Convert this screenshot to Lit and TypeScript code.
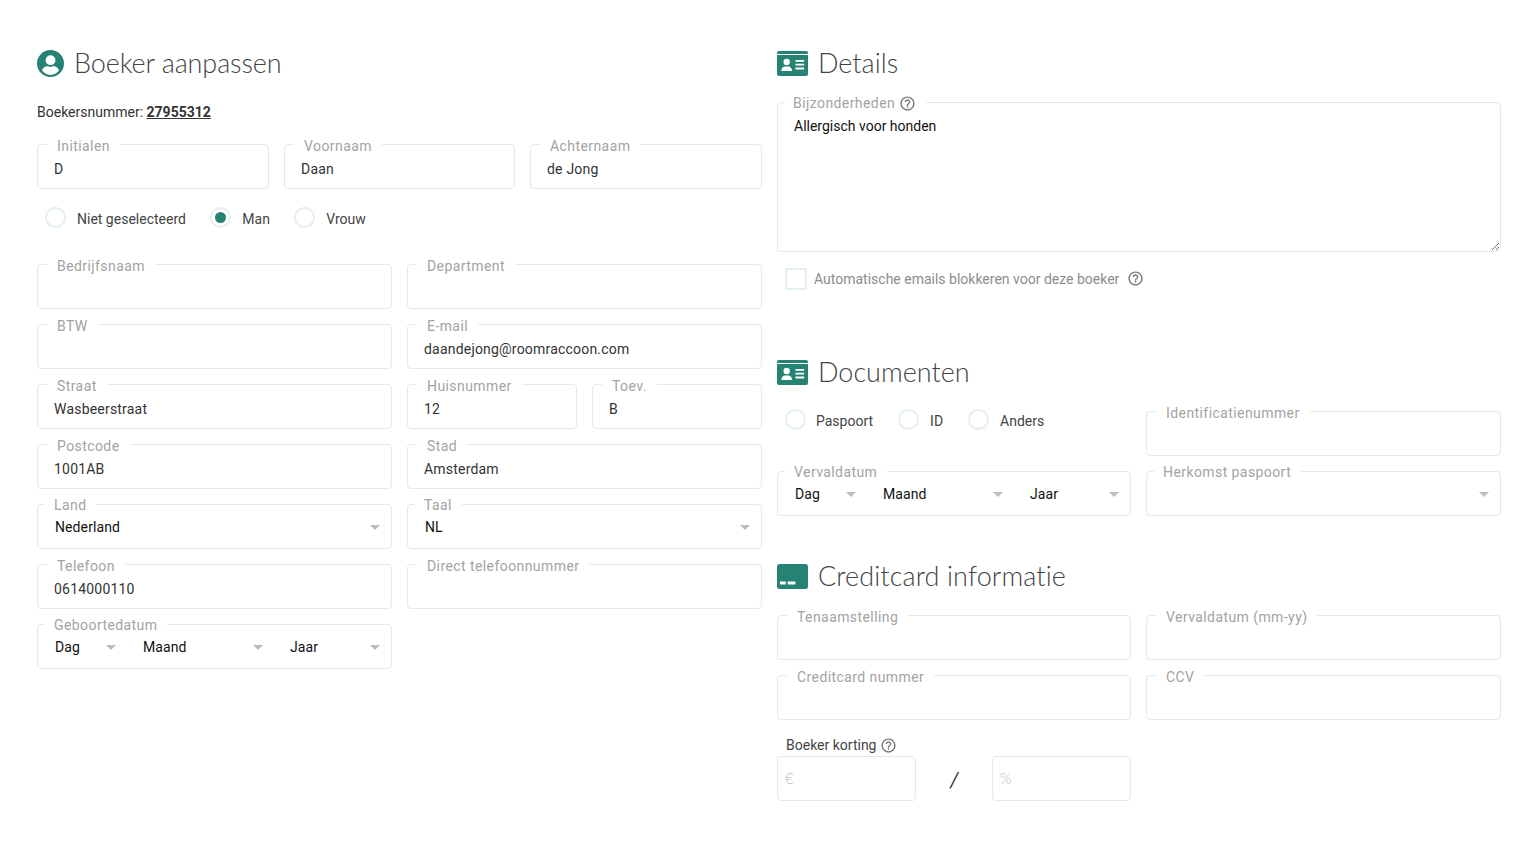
import { LitElement, html, css, nothing } from "lit";
import { customElement } from "lit/decorators.js";

const help = html`<svg class="help" viewBox="0 0 24 24" fill="currentColor"><path d="M11 18h2v-2h-2v2zm1-16C6.48 2 2 6.48 2 12s4.48 10 10 10 10-4.48 10-10S17.52 2 12 2zm0 18c-4.41 0-8-3.59-8-8s3.59-8 8-8 8 3.59 8 8-3.59 8-8 8zm0-14c-2.21 0-4 1.79-4 4h2c0-1.1.9-2 2-2s2 .9 2 2c0 2-3 1.75-3 5h2c0-2.25 3-2.5 3-5 0-2.21-1.79-4-4-4z"/></svg>`;

const userIcon = html`<svg class="ic-user" viewBox="0 0 27 27"><circle cx="13.5" cy="13.5" r="13.5" fill="#268273"/><circle cx="13.5" cy="10.2" r="4.9" fill="#fff"/><path d="M5 20.6c1-3 3.2-4.3 5-4.3 1 0 2 .6 3.500.6s2.500-.6 3.500-.6c1.800 0 4 1.300 5 4.300-2 2.700-5 4.400-8.500 4.400S7 23.300 5 20.600z" fill="#fff"/></svg>`;

const cardIcon = html`<svg class="ic-card" viewBox="0 0 32 25" preserveAspectRatio="none"><path d="M2 0h28a2 2 0 0 1 2 2v1H0V2a2 2 0 0 1 2-2z" fill="#268273"/><path d="M0 4h32v19a2 2 0 0 1-2 2H2a2 2 0 0 1-2-2z" fill="#268273"/><circle cx="10" cy="11" r="3.300" fill="#fff"/><path d="M4.500 20c0-3 2-4.500 3.500-4.500h4c1.500 0 3.500 1.500 3.500 4.500z" fill="#fff"/><path d="M19 9h9v1.800h-9zM19 12.800h9v1.800h-9zM19 16.600h9v1.800h-9z" fill="#fff"/></svg>`;

const creditIcon = html`<svg class="ic-card" viewBox="0 0 32 25" preserveAspectRatio="none"><rect width="32" height="25" rx="2.500" fill="#268273"/><path d="M3 17.500h6v3H3zM11 17.500h8v3h-8z" fill="#fff"/></svg>`;

@customElement("app-root")
export class AppRoot extends LitElement {
  static styles = css`
    :host {
      display: block;
      font-family: Roboto, "Liberation Sans", sans-serif;
      font-size: 14px;
      color: #333;
      background: #fff;
      min-height: 842px;
    }
    .page {
      display: grid;
      grid-template-columns: 725px 724px;
      column-gap: 15px;
      padding: 43px 19px 0 37px;
    }
    .heading {
      display: flex;
      align-items: center;
      height: 40px;
      margin: 0;
      font-family: Lato, sans-serif;
      font-weight: 300;
      font-size: 27px;
      color: #444;
    }
    .heading span { position: relative; top: -1px; }
    .heading.tight { letter-spacing: -0.1px; }
    .heading.wide { letter-spacing: 0.1px; }
    .ic-user { width: 27px; height: 27px; margin-right: 10px; flex: none; }
    .ic-card { width: 31px; height: 25px; margin-right: 10px; flex: none; }
    .booker {
      height: 20px;
      line-height: 20px;
      margin-top: 19px;
    }
    .booker b { font-weight: 700; text-decoration: underline; }

    .grid { display: grid; gap: 15px; }
    .g3 { grid-template-columns: 232px 231px 232px; margin-top: 22px; }
    .g2 { grid-template-columns: 355px 355px; }
    .split { display: grid; grid-template-columns: 170px 170px; gap: 15px; }
    .r2 { grid-template-columns: 354px 355px; }

    .field {
      position: relative;
      height: 45px;
      box-sizing: border-box;
      border: 1px solid #e8e8e8;
      border-radius: 4px;
      letter-spacing: 0.2px;
    }
    .label {
      position: absolute;
      top: -8px;
      left: 9px;
      padding: 0 10px;
      background: #fff;
      color: #a3a3a3;
      line-height: 18px;
      white-space: nowrap;
      letter-spacing: 0.42px;
    }
    .value {
      display: block;
      padding: 15px 0 0 16px;
      line-height: 18px;
      color: #333;
    }
    .field.sel .label { top: -9px; left: 7px; padding: 0 10px 0 9px; }
    .sel-row { display: flex; padding: 13px 0 0 17px; }
    .seg {
      display: flex;
      align-items: center;
      box-sizing: border-box;
      line-height: 18px;
      min-height: 18px;
      color: #111;
      letter-spacing: 0.1px;
    }
    .seg.full { flex: 1; padding-right: 11px; }
    .seg.dag { width: 88px; padding-right: 27px; }
    .seg.maand { width: 147px; padding-right: 27px; }
    .caret {
      width: 0;
      height: 0;
      margin-left: auto;
      border-left: 5px solid transparent;
      border-right: 5px solid transparent;
      border-top: 5px solid #bdbdbd;
      margin-top: 1px;
    }

    .radios {
      display: flex;
      align-items: center;
      height: 20px;
      padding-left: 8px;
      gap: 24.4px;
    }
    .left-radios { margin: 18px 0 36px; height: 21px; }
    .radio { display: flex; align-items: center; gap: 11px; color: #444; }
    .doc-radios .radio:first-child { gap: 10px; }
    .dot {
      width: 21px;
      height: 21px;
      box-sizing: border-box;
      border: 2px solid #e4f0ed;
      border-radius: 50%;
      display: flex;
      align-items: center;
      justify-content: center;
    }
    .dot i { width: 11px; height: 11px; border-radius: 50%; background: #268273; }
    .radio span { position: relative; top: 1px; }
    .doc-radios { height: 21px; align-self: start; margin-top: -2px; gap: 25px; }

    .area-wrap {
      position: relative;
      margin-top: 19px;
    }
    .area {
      box-sizing: border-box;
      height: 150px;
      border: 1px solid #e8e8e8;
      border-radius: 4px;
      padding: 14px 16px;
      line-height: 18px;
      color: #111;
      resize: vertical;
      overflow: auto;
    }
    .area-wrap .label { top: -8px; left: 8px; display: flex; align-items: center; gap: 4px; padding: 0 10px 0 8px; }
    .help { width: 17px; height: 17px; color: #777; flex: none; }

    .check {
      display: flex;
      align-items: center;
      margin: 16px 0 0 8px;
      height: 22px;
      color: #8d8d8d;
    }
    .box {
      width: 22px;
      height: 22px;
      box-sizing: border-box;
      border: 2px solid #e4f0ed;
      margin-right: 7px;
      flex: none;
    }
    .check .help { margin: -1px 0 0 8px; }

    .mt62 { margin-top: 62px; }
    .mt40 { margin-top: 40px; }
    .mt19 { margin-top: 19px; }
    .discount-label {
      display: flex;
      align-items: center;
      gap: 4px;
      height: 20px;
      margin: 15px 0 1px 9px;
      color: #444;
    }
    .discount {
      display: grid;
      grid-template-columns: 139px 76px 139px;
      align-items: center;
    }
    .discount .slash {
      text-align: center;
      font-size: 22px;
      font-style: italic;
      font-family: Lato, sans-serif;
      color: #333;
    }
    .unit {
      display: block;
      padding: 12px 0 0 7px;
      line-height: 18px;
      font-size: 15px;
      font-family: Lato, sans-serif;
      color: #bdbdbd;
      font-weight: 300;
    }
  `;

  private inp(label: string, value = "") {
    return html`<div class="field"><span class="label">${label}</span>${value ? html`<span class="value">${value}</span>` : nothing}</div>`;
  }

  private sel(label: string, value = "") {
    return html`<div class="field sel"><span class="label">${label}</span><div class="sel-row"><span class="seg full">${value}<span class="caret"></span></span></div></div>`;
  }

  private date(label: string) {
    return html`<div class="field sel"><span class="label">${label}</span><div class="sel-row">
      <span class="seg dag">Dag<span class="caret"></span></span>
      <span class="seg maand">Maand<span class="caret"></span></span>
      <span class="seg full">Jaar<span class="caret"></span></span>
    </div></div>`;
  }

  private radio(label: string, on = false) {
    return html`<div class="radio"><div class="dot">${on ? html`<i></i>` : nothing}</div><span>${label}</span></div>`;
  }

  render() {
    return html`<div class="page">
      <section>
        <h2 class="heading tight">${userIcon}<span>Boeker aanpassen</span></h2>
        <div class="booker">Boekersnummer: <b>27955312</b></div>
        <div class="grid g3">
          ${this.inp("Initialen", "D")}${this.inp("Voornaam", "Daan")}${this.inp("Achternaam", "de Jong")}
        </div>
        <div class="radios left-radios">
          ${this.radio("Niet geselecteerd")}${this.radio("Man", true)}${this.radio("Vrouw")}
        </div>
        <div class="grid g2">
          ${this.inp("Bedrijfsnaam")}${this.inp("Department")}
          ${this.inp("BTW")}${this.inp("E-mail", "daandejong@roomraccoon.com")}
          ${this.inp("Straat", "Wasbeerstraat")}
          <div class="split">${this.inp("Huisnummer", "12")}${this.inp("Toev.", "B")}</div>
          ${this.inp("Postcode", "1001AB")}${this.inp("Stad", "Amsterdam")}
          ${this.sel("Land", "Nederland")}${this.sel("Taal", "NL")}
          ${this.inp("Telefoon", "0614000110")}${this.inp("Direct telefoonnummer")}
          ${this.date("Geboortedatum")}
        </div>
      </section>

      <section>
        <h2 class="heading">${cardIcon}<span>Details</span></h2>
        <div class="area-wrap">
          <span class="label">Bijzonderheden ${help}</span>
          <div class="area">Allergisch voor honden</div>
        </div>
        <div class="check"><div class="box"></div>Automatische emails blokkeren voor deze boeker ${help}</div>

        <h2 class="heading mt62">${cardIcon}<span>Documenten</span></h2>
        <div class="grid r2 mt19">
          <div class="radios doc-radios">${this.radio("Paspoort")}${this.radio("ID")}${this.radio("Anders")}</div>
          ${this.inp("Identificatienummer")}
          ${this.date("Vervaldatum")}${this.sel("Herkomst paspoort")}
        </div>

        <h2 class="heading mt40 wide">${creditIcon}<span>Creditcard informatie</span></h2>
        <div class="grid r2 mt19">
          ${this.inp("Tenaamstelling")}${this.inp("Vervaldatum (mm-yy)")}
          ${this.inp("Creditcard nummer")}${this.inp("CCV")}
        </div>
        <div class="discount-label">Boeker korting ${help}</div>
        <div class="discount">
          <div class="field"><span class="unit">€</span></div>
          <span class="slash">/</span>
          <div class="field"><span class="unit">%</span></div>
        </div>
      </section>
    </div>`;
  }
}
